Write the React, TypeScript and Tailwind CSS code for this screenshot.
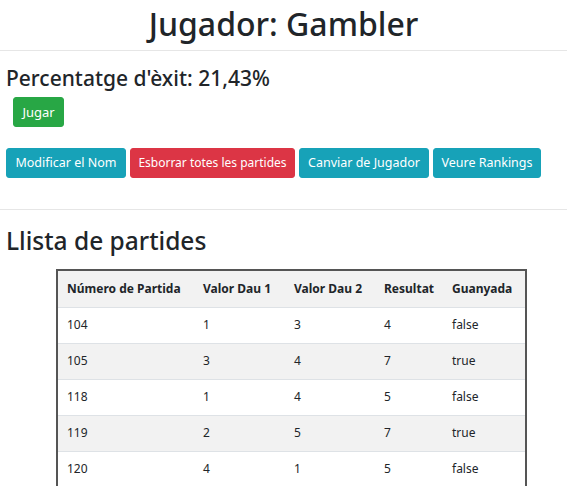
const partides = [
  { num: 104, d1: 1, d2: 3, res: 4, guanyada: "false" },
  { num: 105, d1: 3, d2: 4, res: 7, guanyada: "true" },
  { num: 118, d1: 1, d2: 4, res: 5, guanyada: "false" },
  { num: 119, d1: 2, d2: 5, res: 7, guanyada: "true" },
  { num: 120, d1: 4, d2: 1, res: 5, guanyada: "false" },
];

const btn = "h-[30px] shrink-0 whitespace-nowrap rounded-[3px] text-white text-[12.5px] leading-none border";

export default function App() {
  return (
    <div className="w-[567px] h-[486px] overflow-hidden bg-white text-[#212529] font-['Noto_Sans',sans-serif]">
      <h1 className="h-[50px] pt-[3px] text-center text-[32px] leading-[42px] font-medium">Jugador: Gambler</h1>
      <hr className="border-[#e6e6e6]" />

      <div className="pl-[6px]">
        <h4 className="mt-[14px] text-[21px] leading-[27px] font-medium">Percentatge d'èxit: 21,43%</h4>
        <button className={`${btn} mt-[5px] ml-[7px] w-[51px] h-[29px] text-[13px] bg-[#28a745] border-[#28a745]`}>Jugar</button>

        <div className="mt-[21px] flex gap-[4px]">
          <button className={`${btn} w-[120px] bg-[#17a2b8] border-[#17a2b8]`}>Modificar el Nom</button>
          <button className={`${btn} w-[165px] text-[12px] bg-[#dc3545] border-[#dc3545]`}>Esborrar totes les partides</button>
          <button className={`${btn} w-[130px] bg-[#17a2b8] border-[#17a2b8]`}>Canviar de Jugador</button>
          <button className={`${btn} w-[108px] bg-[#17a2b8] border-[#17a2b8]`}>Veure Rankings</button>
        </div>
      </div>

      <hr className="mt-[31px] border-[#e6e6e6]" />

      <h2 className="pl-[6px] mt-[15px] text-[24.5px] leading-[32px] font-medium">Llista de partides</h2>

      <table className="mt-[12px] ml-[56px] w-[471px] table-fixed border-collapse border-2 border-[#555] text-[12px]">
        <thead>
          <tr className="h-[37px] bg-[#f2f2f2] text-left text-[12px]">
            <th className="w-[137px] pl-[9px] font-bold">Número de Partida</th>
            <th className="w-[91px] pl-[9px] font-bold">Valor Dau 1</th>
            <th className="w-[90px] pl-[9px] font-bold">Valor Dau 2</th>
            <th className="w-[68px] pl-[9px] font-bold">Resultat</th>
            <th className="pl-[9px] font-bold">Guanyada</th>
          </tr>
        </thead>
        <tbody>
          {partides.map((p, i) => (
            <tr key={p.num} className={`h-[36px] border-t border-[#dee2e6] ${i % 2 === 1 ? "bg-[#f2f2f2]" : "bg-white"}`}>
              <td className="pl-[9px]">{p.num}</td>
              <td className="pl-[9px]">{p.d1}</td>
              <td className="pl-[9px]">{p.d2}</td>
              <td className="pl-[9px]">{p.res}</td>
              <td className="pl-[9px]">{p.guanyada}</td>
            </tr>
          ))}
        </tbody>
      </table>
    </div>
  );
}
